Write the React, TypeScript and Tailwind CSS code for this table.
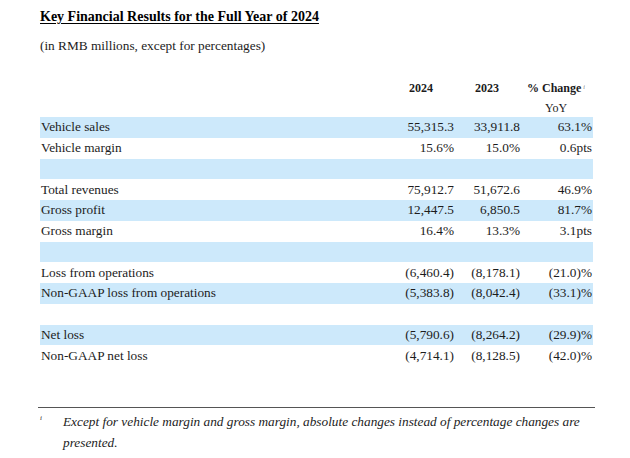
const rows: { label: string; a: string; b: string; c: string; blue: boolean }[] = [
  { label: 'Vehicle sales', a: '55,315.3', b: '33,911.8', c: '63.1%', blue: true },
  { label: 'Vehicle margin', a: '15.6%', b: '15.0%', c: '0.6pts', blue: false },
  { label: '', a: '', b: '', c: '', blue: true },
  { label: 'Total revenues', a: '75,912.7', b: '51,672.6', c: '46.9%', blue: false },
  { label: 'Gross profit', a: '12,447.5', b: '6,850.5', c: '81.7%', blue: true },
  { label: 'Gross margin', a: '16.4%', b: '13.3%', c: '3.1pts', blue: false },
  { label: '', a: '', b: '', c: '', blue: true },
  { label: 'Loss from operations', a: '(6,460.4)', b: '(8,178.1)', c: '(21.0)%', blue: false },
  { label: 'Non-GAAP loss from operations', a: '(5,383.8)', b: '(8,042.4)', c: '(33.1)%', blue: true },
  { label: '', a: '', b: '', c: '', blue: false },
  { label: 'Net loss', a: '(5,790.6)', b: '(8,264.2)', c: '(29.9)%', blue: true },
  { label: 'Non-GAAP net loss', a: '(4,714.1)', b: '(8,128.5)', c: '(42.0)%', blue: false },
];

const App = () => {
  return (
    <div className="w-[630px] h-[458px] bg-white px-[40px] pt-[9px] text-[#1c1c1c] font-['Liberation_Serif','Times_New_Roman',serif] overflow-hidden">
      {/* Title */}
      <h1 className="text-[14px] leading-[16px] font-bold text-black underline underline-offset-[2px]">
        Key Financial Results for the Full Year of 2024
      </h1>
      <p className="mt-[13px] text-[13.3px] leading-[16px]">(in RMB millions, except for percentages)</p>

      {/* Table */}
      <div className="mt-[24px] w-[553px] text-[13.3px]">
        <div className="flex h-[20px] items-center text-[12px] font-bold">
          <div className="flex-1" />
          <div className="w-[100px] pr-[21px] text-right">2024</div>
          <div className="w-[66px] pr-[21px] text-right">2023</div>
          <div className="w-[72px] text-center">
            % Change<sup className="ml-[2px] text-[6px] font-normal italic text-[#777]">i</sup>
          </div>
          <div className="w-[1px]" />
        </div>
        <div className="flex h-[19px] items-center text-[12px]">
          <div className="flex-1" />
          <div className="w-[72px] text-center">YoY</div>
          <div className="w-[1px]" />
        </div>
        {rows.map((r, i) => (
          <div key={i} className={`flex h-[20.75px] items-center ${r.blue ? 'bg-[#cde9fb]' : 'bg-white'}`}>
            <div className="flex-1 pl-[1px]">{r.label}</div>
            <div className="w-[100px] text-right">{r.a}</div>
            <div className="w-[66px] text-right">{r.b}</div>
            <div className="w-[72px] text-right">{r.c}</div>
            <div className="w-[1px]" />
          </div>
        ))}
      </div>

      {/* Footnote */}
      <div className="mt-[41px] -ml-[2px] w-[557px] border-t-[1.5px] border-[#555]" />
      <div className="mt-[3px] flex text-[13.3px] leading-[21px] italic">
        <div className="w-[23px] pt-[2px] text-[7px] leading-[10px]">i</div>
        <p className="flex-1">
          Except for vehicle margin and gross margin, absolute changes instead of percentage changes are
          <br />
          presented.
        </p>
      </div>
    </div>
  );
};

export default App;
